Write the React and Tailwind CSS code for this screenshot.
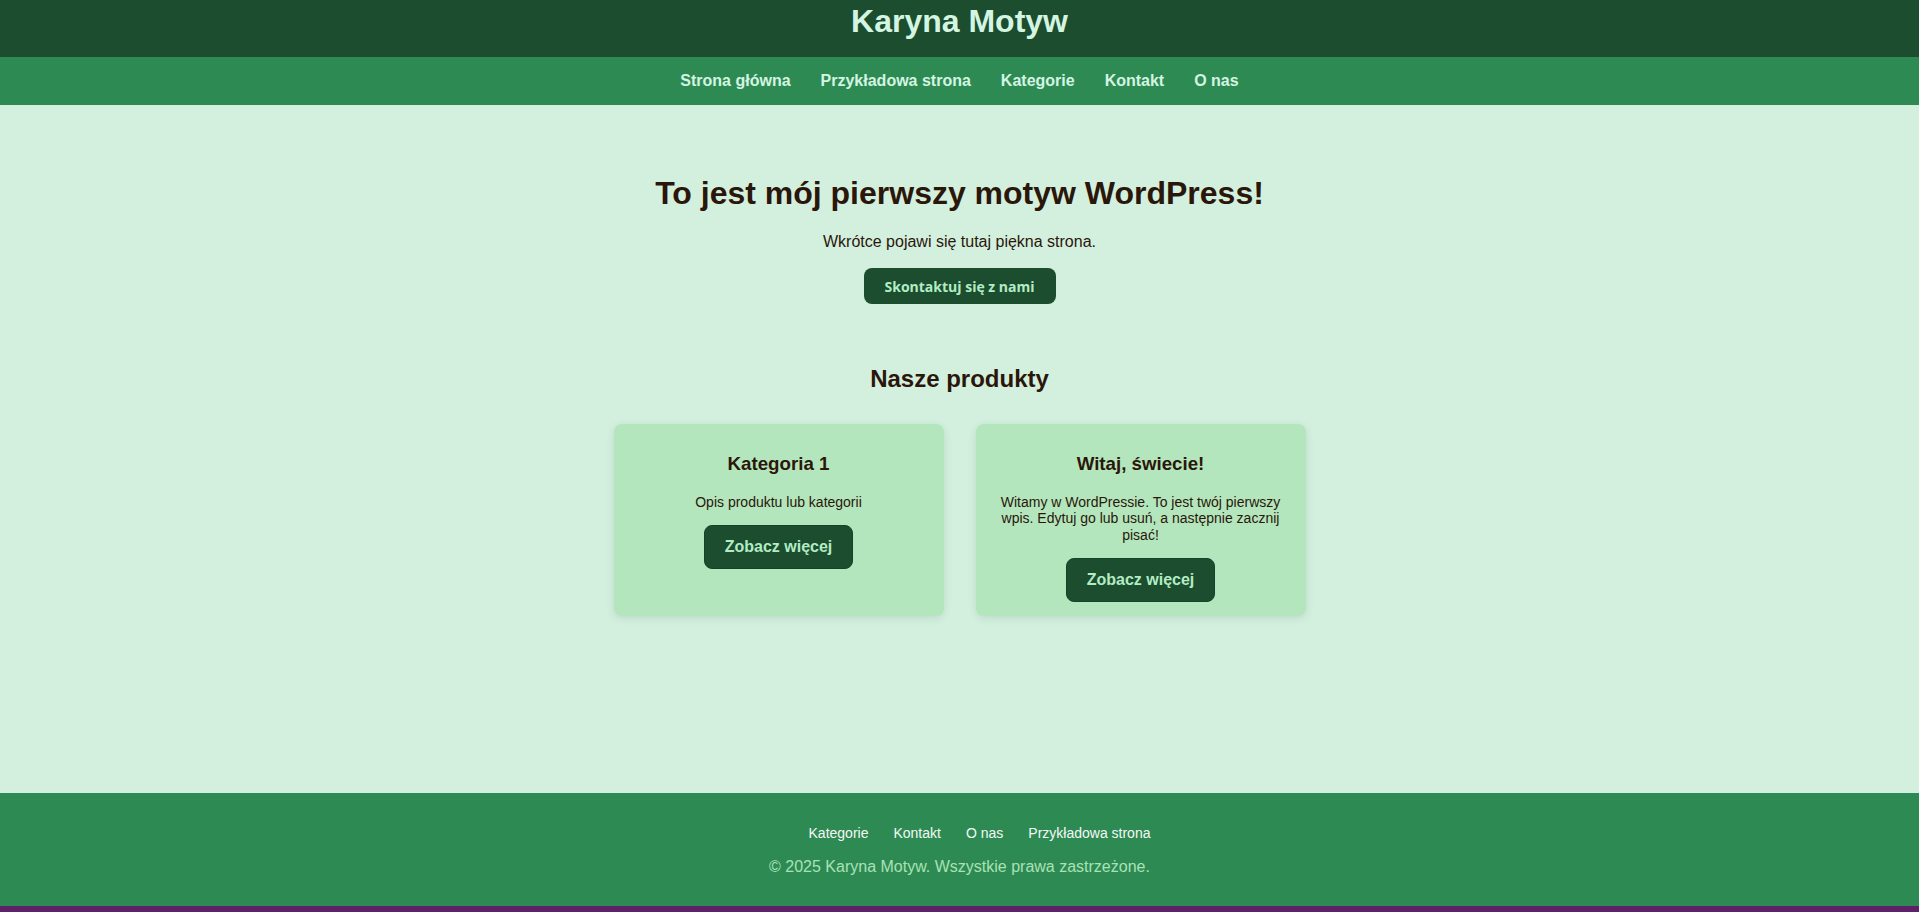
import React from "react";

const navLinks = ["Strona główna", "Przykładowa strona", "Kategorie", "Kontakt", "O nas"];
const footerLinks = ["Kategorie", "Kontakt", "O nas", "Przykładowa strona"];

const products = [
  { title: "Kategoria 1", text: "Opis produktu lub kategorii" },
  {
    title: "Witaj, świecie!",
    text: "Witamy w WordPressie. To jest twój pierwszy wpis. Edytuj go lub usuń, a następnie zacznij pisać!",
  },
];

const App = () => {
  return (
    <div className="flex flex-col font-['Liberation_Sans',Arial,sans-serif] bg-[#d3f0df]">
      {/* Site title */}
      <header className="h-[57px] bg-[#1b4d2e] flex justify-center">
        <h1 className="text-[32px] font-bold leading-[37px] mt-[3px] text-[#d3f5e2]">Karyna Motyw</h1>
      </header>

      {/* Main navigation */}
      <nav className="h-[48px] bg-[#2e8a53] flex items-center justify-center gap-[30px]">
        {navLinks.map((link) => (
          <a key={link} href="#" className="text-[16px] font-bold text-[#d3f5e2]">
            {link}
          </a>
        ))}
      </nav>

      <main className="min-h-[688px] flex flex-col items-center pt-[70px] text-[#2b160a]">
        <h1 className="text-[32px] font-bold leading-[37px]">To jest mój pierwszy motyw WordPress!</h1>
        <p className="text-[16px] leading-[18px] mt-[21px]">Wkrótce pojawi się tutaj piękna strona.</p>
        <a
          href="#"
          className="mt-[17px] h-[36px] w-[192px] flex items-center justify-center rounded-[8px] bg-[#1b4d2e] text-[#b3ecc4] text-[14px] font-bold font-['Open_Sans',sans-serif]"
        >
          Skontaktuj się z nami
        </a>

        <h2 className="text-[24px] font-bold leading-[28px] mt-[61px]">Nasze produkty</h2>

        <div className="mt-[31px] grid grid-cols-[330px_330px] gap-[32px]">
          {products.map((product) => (
            <div
              key={product.title}
              className="bg-[#b3e6bc] rounded-[8px] shadow-[0_2px_8px_rgba(0,0,0,0.1)] px-5 pt-[29px] pb-[14px] flex flex-col items-center text-center"
            >
              <h3 className="text-[18.72px] font-bold leading-[21px]">{product.title}</h3>
              <p className="text-[14px] leading-[16.3px] mt-[20px]">{product.text}</p>
              <a
                href="#"
                className="mt-[15px] px-[20px] py-[12px] rounded-[8px] bg-[#1b4d2e] border border-[#174226] text-[#b3ecc4] text-[16px] font-bold leading-[18px]"
              >
                Zobacz więcej
              </a>
            </div>
          ))}
        </div>
      </main>

      <footer className="h-[113px] bg-[#2e8a53] flex flex-col items-center pt-[28px]">
        <ul className="flex justify-center gap-[25px] pl-10">
          {footerLinks.map((link) => (
            <li key={link}>
              <a href="#" className="text-[14px] leading-[16px] text-[#f4f8f5]">
                {link}
              </a>
            </li>
          ))}
        </ul>
        <p className="mt-[13px] text-[16px] leading-[18px] text-[#a8e2b6]">
          © 2025 Karyna Motyw. Wszystkie prawa zastrzeżone.
        </p>
      </footer>

      <div className="h-[6px] bg-[#5e2068]" />
    </div>
  );
};

export default App;
